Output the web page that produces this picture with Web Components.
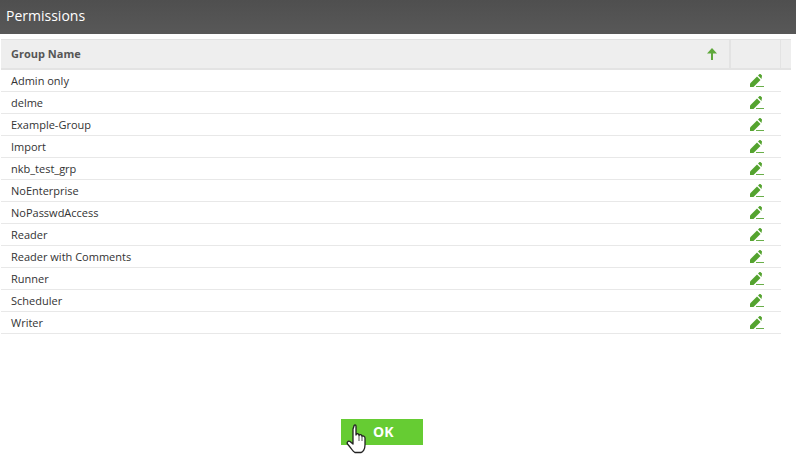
<!DOCTYPE html>
<html><head><meta charset="utf-8"><style>
html,body{margin:0;padding:0;background:#fff;font-family:"Open Sans",sans-serif;color:#333}
</style></head><body>
<perm-dialog title-text="Permissions">
<perm-table>
<perm-row>Admin only</perm-row><perm-row>delme</perm-row><perm-row>Example-Group</perm-row><perm-row>Import</perm-row><perm-row>nkb_test_grp</perm-row><perm-row>NoEnterprise</perm-row><perm-row>NoPasswdAccess</perm-row><perm-row>Reader</perm-row><perm-row>Reader with Comments</perm-row><perm-row>Runner</perm-row><perm-row>Scheduler</perm-row><perm-row>Writer</perm-row>
</perm-table>
<ok-button>OK</ok-button>
</perm-dialog>
<script>
function def(name,html){customElements.define(name,class extends HTMLElement{constructor(){super();this.attachShadow({mode:"open"}).innerHTML=html}})}
def("perm-dialog",`<style>
:host{display:flex;flex-direction:column;width:796px;height:460px;overflow:hidden}
.t{height:34px;flex:none;box-sizing:border-box;background:linear-gradient(#4f4f4f,#585858);color:#fff;font-size:14px;line-height:32px;padding-left:6px}
.b{padding:5px 0 0 1px;flex:1}
</style><div class="t">Permissions</div><div class="b"><slot></slot></div>`);
def("perm-table",`<style>
:host{display:block;width:790px}
.h{display:flex;height:31px;box-sizing:border-box;background:#eee;border-top:1px solid #e3e3e3;border-bottom:2px solid #e3e3e3;font-size:11px;font-weight:700;color:#555;line-height:26px}
.n{width:730px;box-sizing:border-box;border-right:2px solid #e3e3e3;display:flex;align-items:center;justify-content:space-between;padding:0 12px 0 10px}
.e{width:50px;box-sizing:border-box;border-right:1px solid #e3e3e3}
svg{display:block}
</style><div class="h"><div class="n"><span>Group Name</span><svg width="10" height="12" viewBox="0 0 10 12"><path d="M5 0L10 5.500H6V12H4V5.500H0Z" fill="#5fa83c"/></svg></div><div class="e"></div></div><slot></slot>`);
def("perm-row",`<style>
:host{display:flex;width:780px;height:22px;box-sizing:border-box;border-bottom:1px solid #e8e8e8;font-size:11px;line-height:21px;color:#333;align-items:center}
.n{width:730px;padding-left:10px;box-sizing:border-box}
.e{width:50px;display:flex;justify-content:center;padding:0 0 1px 2px;box-sizing:border-box}
svg{display:block}
</style><div class="n"><slot></slot></div><div class="e"><svg width="14" height="13" viewBox="0 0 14 13"><path d="M0 13V9.500L7 2.500L10.500 6L3.500 13Z" fill="#54a32f"/><path d="M8 1.500L9.300 .2C9.700 -.1 10.300 -.1 10.700 .2L11.800 1.300C12.100 1.700 12.100 2.300 11.800 2.700L11.500 5Z" fill="#54a32f"/><path d="M6 12H14V13H6Z" fill="#6aaf4a"/></svg></div>`);
def("ok-button",`<style>
:host{display:block;position:absolute;left:341px;top:419px;width:82px;height:26px;background:#66cc33;color:#fff;font-weight:700;font-size:14px;line-height:25px;box-sizing:border-box;padding-left:32px}
svg{position:absolute;left:5px;top:5px}
</style><slot></slot><svg width="22" height="30" viewBox="0 0 22 30"><path d="M8 2C8 .5 10 .5 10 2V11C10.500 9 13 9.500 13 11.500C13.500 10 16 10.500 16 12.500C16.500 11.500 19 12 19 14V21C19 25 17 28 15 28.500H9C7 28 5 24 1.500 20C.5 18.500 2 16.500 4 17.500L7 20V5Z" fill="#fff" stroke="#222" stroke-width="1.300" stroke-linejoin="round"/><path d="M13 12V17M16 13V17" stroke="#555" stroke-width="1"/></svg>`);
</script>
</body></html>
